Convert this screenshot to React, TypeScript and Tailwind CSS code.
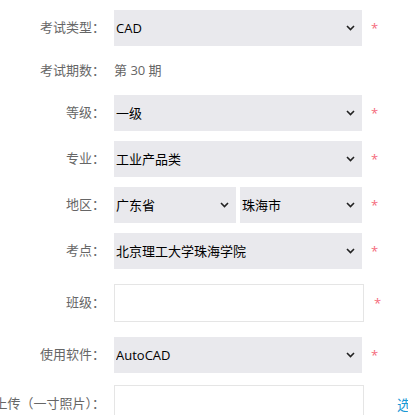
import { ReactNode } from "react";

const font = { fontFamily: '"Open Sans", "Noto Sans CJK SC", sans-serif' };

const Chevron = () => (
  <svg
    className="pointer-events-none absolute right-[7px] top-1/2 -translate-y-1/2"
    width="9"
    height="6"
    viewBox="0 0 9 6"
  >
    <path d="M1 1l3.5 3.5L8 1" fill="none" stroke="#222" strokeWidth="1.6" />
  </svg>
);

const Select = ({ value, width }: { value: string; width: string }) => (
  <div className={`relative h-[36px] ${width} shrink-0`}>
    <select
      defaultValue={value}
      className="h-full w-full appearance-none bg-[#e9e9ed] pl-[2px] text-[13px] leading-[36px] text-black outline-none"
      style={font}
    >
      <option>{value}</option>
    </select>
    <Chevron />
  </div>
);

const Star = ({ className = "ml-[9px]" }: { className?: string }) => (
  <span className={`${className} text-[13px] leading-none text-[#f56c7c]`}>*</span>
);

const Row = ({
  label,
  children,
  className = "",
}: {
  label: string;
  children: ReactNode;
  className?: string;
}) => (
  <div className={`flex items-center ${className}`}>
    <div className="flex w-[105px] shrink-0 justify-end whitespace-nowrap text-[13px] text-[#666]">
      <span>{label}</span>
    </div>
    <div className="ml-[9px] flex items-center">{children}</div>
  </div>
);

export default function App() {
  return (
    <div className="h-[415px] w-[408px] overflow-hidden bg-white pt-[10px]" style={font}>
      <Row label="考试类型：">
        <Select value="CAD" width="w-[248px]" />
        <Star />
      </Row>
      <Row label="考试期数：" className="mt-[10px] h-[29px]">
        <span className="text-[13px] text-[#666]">第 30 期</span>
      </Row>
      <Row label="等级：" className="mt-[10px]">
        <Select value="一级" width="w-[248px]" />
        <Star />
      </Row>
      <Row label="专业：" className="mt-[10px]">
        <Select value="工业产品类" width="w-[248px]" />
        <Star />
      </Row>
      <Row label="地区：" className="mt-[10px]">
        <div className="flex gap-[4px]">
          <Select value="广东省" width="w-[122px]" />
          <Select value="珠海市" width="w-[122px]" />
        </div>
        <Star />
      </Row>
      <Row label="考点：" className="mt-[10px]">
        <Select value="北京理工大学珠海学院" width="w-[248px]" />
        <Star />
      </Row>
      <Row label="班级：" className="mt-[15px]">
        <input className="h-[38px] w-[250px] border border-[#e5e5e5] bg-white outline-none" />
        <Star className="ml-[10px]" />
      </Row>
      <Row label="使用软件：" className="mt-[15px]">
        <Select value="AutoCAD" width="w-[248px]" />
        <Star />
      </Row>
      <Row label="照片上传（一寸照片）：" className="mt-[12px]">
        <input className="h-[38px] w-[250px] border border-[#e5e5e5] bg-white outline-none" />
        <span className="ml-[33px] whitespace-nowrap text-[14px] text-[#1a9ad6]">选择照片</span>
      </Row>
    </div>
  );
}
